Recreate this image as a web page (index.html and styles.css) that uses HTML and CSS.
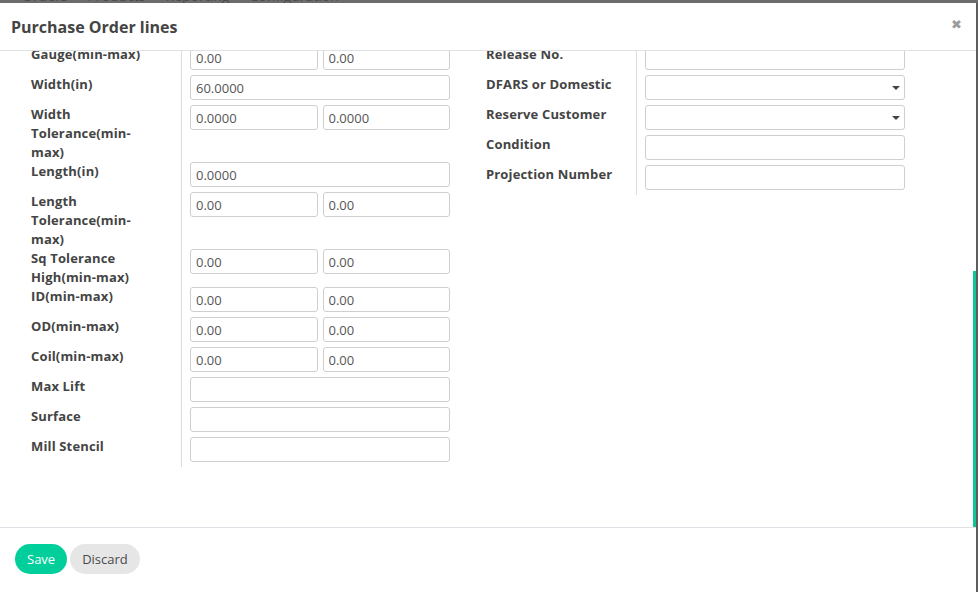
FILE: index.html
```html
<!DOCTYPE html>
<html lang="en">
<head>
<meta charset="utf-8">
<title>Purchase Order lines</title>
<link rel="stylesheet" href="styles.css">
</head>
<body>
<div class="backdrop-nav">
  <span>Orders</span><span>Products</span><span>Reporting</span><span>Configuration</span>
</div>
<div class="modal">
  <header class="modal-header">
    <h4 class="modal-title">Purchase Order lines</h4>
    <button class="close" type="button">✖</button>
  </header>
  <div class="modal-body">
    <div class="groups">
      <div class="group">
        <div class="lbl">Gauge(min-max)</div>
        <div class="fld"><div class="pair"><input class="inp" value="0.00"><input class="inp" value="0.00"></div></div>

        <div class="lbl">Width(in)</div>
        <div class="fld"><input class="inp" value="60.0000"></div>

        <div class="lbl">Width<br>Tolerance(min-<br>max)</div>
        <div class="fld"><div class="pair"><input class="inp" value="0.0000"><input class="inp" value="0.0000"></div></div>

        <div class="lbl">Length(in)</div>
        <div class="fld"><input class="inp" value="0.0000"></div>

        <div class="lbl">Length<br>Tolerance(min-<br>max)</div>
        <div class="fld"><div class="pair"><input class="inp" value="0.00"><input class="inp" value="0.00"></div></div>

        <div class="lbl">Sq Tolerance<br>High(min-max)</div>
        <div class="fld"><div class="pair"><input class="inp" value="0.00"><input class="inp" value="0.00"></div></div>

        <div class="lbl">ID(min-max)</div>
        <div class="fld"><div class="pair"><input class="inp" value="0.00"><input class="inp" value="0.00"></div></div>

        <div class="lbl">OD(min-max)</div>
        <div class="fld"><div class="pair"><input class="inp" value="0.00"><input class="inp" value="0.00"></div></div>

        <div class="lbl">Coil(min-max)</div>
        <div class="fld"><div class="pair"><input class="inp" value="0.00"><input class="inp" value="0.00"></div></div>

        <div class="lbl">Max Lift</div>
        <div class="fld"><input class="inp" value=""></div>

        <div class="lbl">Surface</div>
        <div class="fld"><input class="inp" value=""></div>

        <div class="lbl">Mill Stencil</div>
        <div class="fld"><input class="inp" value=""></div>
      </div>

      <div class="group">
        <div class="lbl">Release No.</div>
        <div class="fld"><input class="inp" value=""></div>

        <div class="lbl">DFARS or Domestic</div>
        <div class="fld"><div class="inp select"></div></div>

        <div class="lbl">Reserve Customer</div>
        <div class="fld"><div class="inp select"></div></div>

        <div class="lbl">Condition</div>
        <div class="fld"><input class="inp" value=""></div>

        <div class="lbl">Projection Number</div>
        <div class="fld"><input class="inp" value=""></div>
      </div>
    </div>
    <div class="scroll-thumb"></div>
  </div>
  <footer class="modal-footer">
    <button class="btn btn-save" type="button">Save</button>
    <button class="btn btn-discard" type="button">Discard</button>
  </footer>
</div>
</body>
</html>
```
FILE: styles.css
```css
* { box-sizing: border-box; }

html, body {
  margin: 0;
  height: 100%;
}

body {
  background: #5e5e5e;
  font-family: "Open Sans", "Liberation Sans", sans-serif;
  overflow: hidden;
}

.backdrop-nav {
  height: 3px;
  overflow: hidden;
  background: #6c6c6c;
  color: #4a4a4a;
  font-size: 14px;
  line-height: 0;
  padding-left: 22px;
  display: flex;
  align-items: flex-start;
  gap: 20px;
  white-space: nowrap;
}

.backdrop-nav span {
  display: block;
  margin-top: -4px;
}

.modal {
  width: 976px;
  background: #fff;
  height: 589px;
  display: flex;
  flex-direction: column;
}

.modal-header {
  height: 48px;
  border-bottom: 1px solid #dee2e6;
  display: flex;
  align-items: center;
  justify-content: space-between;
  padding: 0 14px 0 11px;
  flex: none;
}

.modal-title {
  margin: 0;
  font-size: 16px;
  font-weight: 700;
  color: #444;
}

.close {
  border: 0;
  background: none;
  padding: 0;
  font: 400 13px/1 "DejaVu Sans", sans-serif;
  color: #9c9c9c;
  margin-top: -4px;
}

.modal-body {
  position: relative;
  height: 476px;
  overflow: hidden;
  flex: none;
}

.groups {
  display: flex;
  margin-top: -6px;
}

.group {
  width: 455px;
  padding-left: 31px;
  display: grid;
  grid-template-columns: 151px 1fr;
  align-content: start;
}

.lbl {
  border-right: 1px solid #dcdcdc;
  min-height: 30px;
  font-size: 13px;
  line-height: 19px;
  font-weight: 700;
  color: #444;
  letter-spacing: 0.15px;
  white-space: nowrap;
}

.fld {
  padding: 0 5px 5px 8px;
}

.pair {
  display: flex;
  gap: 5px;
}

.pair .inp {
  flex: 1;
  min-width: 0;
}

.inp {
  display: block;
  width: 100%;
  height: 25px;
  border: 1px solid #cfcfcf;
  border-radius: 3px;
  padding: 0 5px;
  font-family: "Open Sans", "Liberation Sans", sans-serif;
  font-size: 13px;
  color: #555;
  background: #fff;
  outline: none;
}

.select {
  position: relative;
}

.select::after {
  content: "";
  position: absolute;
  right: 4px;
  top: 10px;
  border-left: 4px solid transparent;
  border-right: 4px solid transparent;
  border-top: 4px solid #444;
}

.scroll-thumb {
  position: absolute;
  right: 0;
  top: 220px;
  bottom: 0;
  width: 3px;
  background: #0bc896;
}

.modal-footer {
  border-top: 1px solid #dee2e6;
  padding: 16px 15px;
  display: flex;
  gap: 3px;
  flex: none;
}

.btn {
  height: 30px;
  border: 0;
  border-radius: 15px;
  padding: 0 12px;
  font-family: "Open Sans", "Liberation Sans", sans-serif;
  font-size: 13px;
}

.btn-save {
  background: #00cf9b;
  color: #fff;
}

.btn-discard {
  background: #e6e6e6;
  color: #4a4a4a;
}
```
